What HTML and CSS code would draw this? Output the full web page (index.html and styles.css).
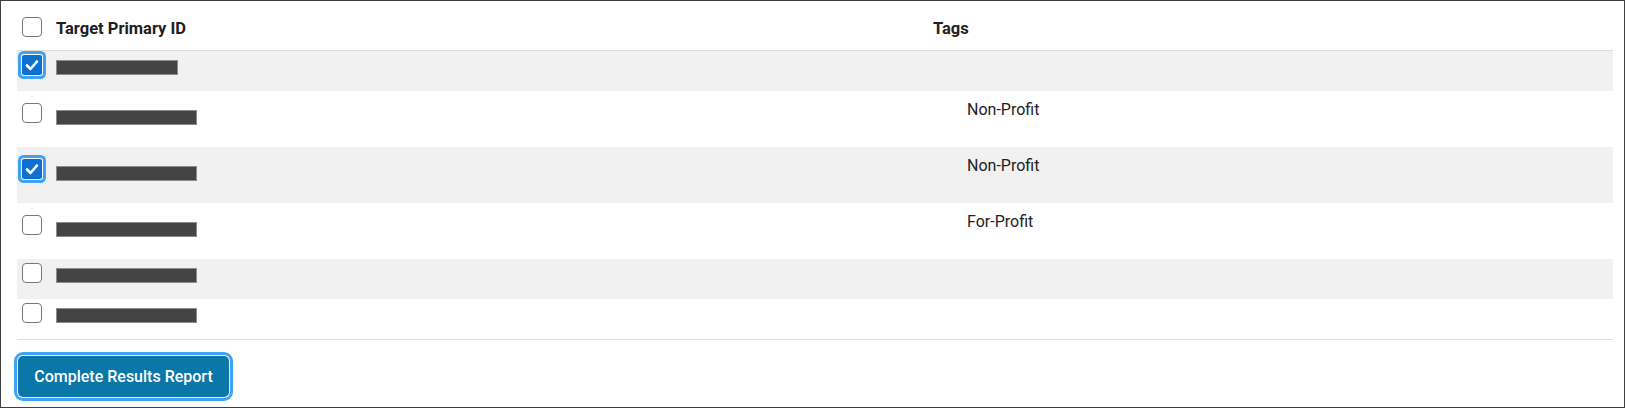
FILE: index.html
```html
<!DOCTYPE html>
<html lang="en">
<head>
<meta charset="utf-8">
<title>Targets</title>
<link rel="stylesheet" href="styles.css">
</head>
<body>
<div class="frame">
  <div class="table">
    <div class="row row--head">
      <div class="cell cell--check"><span class="cb"></span></div>
      <div class="cell cell--id th">Target Primary ID</div>
      <div class="cell cell--tags th">Tags</div>
    </div>
    <div class="row row--alt">
      <div class="cell cell--check"><span class="cb cb--checked"><svg viewBox="0 0 20 20" width="20" height="20"><path d="M5 10.5 L8.5 14 L15 6.5" fill="none" stroke="#fff" stroke-width="2.6" stroke-linecap="round" stroke-linejoin="round"/></svg></span></div>
      <div class="cell cell--id"><span class="redact redact--short"></span></div>
      <div class="cell cell--tags"></div>
    </div>
    <div class="row row--tall">
      <div class="cell cell--check"><span class="cb"></span></div>
      <div class="cell cell--id"><span class="redact"></span></div>
      <div class="cell cell--tags">Non-Profit</div>
    </div>
    <div class="row row--tall row--alt">
      <div class="cell cell--check"><span class="cb cb--checked"><svg viewBox="0 0 20 20" width="20" height="20"><path d="M5 10.5 L8.5 14 L15 6.5" fill="none" stroke="#fff" stroke-width="2.6" stroke-linecap="round" stroke-linejoin="round"/></svg></span></div>
      <div class="cell cell--id"><span class="redact"></span></div>
      <div class="cell cell--tags">Non-Profit</div>
    </div>
    <div class="row row--tall">
      <div class="cell cell--check"><span class="cb"></span></div>
      <div class="cell cell--id"><span class="redact"></span></div>
      <div class="cell cell--tags">For-Profit</div>
    </div>
    <div class="row row--alt">
      <div class="cell cell--check"><span class="cb"></span></div>
      <div class="cell cell--id"><span class="redact"></span></div>
      <div class="cell cell--tags"></div>
    </div>
    <div class="row row--last">
      <div class="cell cell--check"><span class="cb"></span></div>
      <div class="cell cell--id"><span class="redact"></span></div>
      <div class="cell cell--tags"></div>
    </div>
  </div>
  <div class="actions">
    <button class="btn" type="button">Complete Results Report</button>
  </div>
</div>
</body>
</html>
```
FILE: styles.css
```css
* { box-sizing: border-box; }
html, body { margin: 0; padding: 0; background: #fff; }
body { font-family: Roboto, "Liberation Sans", Arial, sans-serif; color: #222; }

.frame {
  width: 1625px;
  height: 408px;
  border: 1px solid #3f3f3f;
  padding-left: 16px;
  background: #fff;
}

.table { width: 1596px; }

.row {
  display: grid;
  grid-template-columns: 39px 877px 1fr;
  height: 40px;
  align-items: start;
}
.row--alt { background: #f1f1f1; }
.row--tall { height: 56px; }
.row--head {
  height: 50px;
  border-bottom: 1px solid #dedede;
}
.row--last {
  height: 41px;
  border-bottom: 1px solid #dedede;
}

.cell--check { padding: 4px 0 0 5px; display: flex; }
.row--tall .cell--check { padding-top: 12px; }
.row--head .cell--check { padding-top: 16px; }

.th {
  font-size: 16.5px;
  font-weight: 700;
  color: #1e1e1e;
  padding-top: 18px;
}

.cell--tags { font-size: 16px; padding: 9px 0 0 34px; color: #222; }
.row--head .cell--tags { padding-left: 0; padding-top: 18px; font-size: 16.5px; }

.cb {
  width: 20px;
  height: 20px;
  border: 1.5px solid #777;
  border-radius: 4px;
  background: #fff;
  display: block;
}
.cb--checked {
  border: none;
  border-radius: 2px;
  background: #0d6fd2;
  box-shadow: 0 0 0 1px #fff, 0 0 0 4px #3ea2f7;
}
.cb--checked svg { display: block; }

.redact {
  display: block;
  width: 141px;
  height: 15px;
  margin-top: 9px;
  background: #444;
  border: 1px solid #8c8c8c;
}
.redact--short { width: 122px; }
.row--tall .redact { margin-top: 19px; }

.actions { padding-top: 16px; padding-left: 1px; }

.btn {
  width: 211px;
  height: 41px;
  border: none;
  border-radius: 5px;
  background: #0b76a8;
  color: #fff;
  font-family: Roboto, "Liberation Sans", Arial, sans-serif;
  font-size: 16px;
  font-weight: 500;
  box-shadow: 0 0 0 1px #fff, 0 0 0 4px #3ea2f7;
  padding: 0;
  cursor: pointer;
}
```
